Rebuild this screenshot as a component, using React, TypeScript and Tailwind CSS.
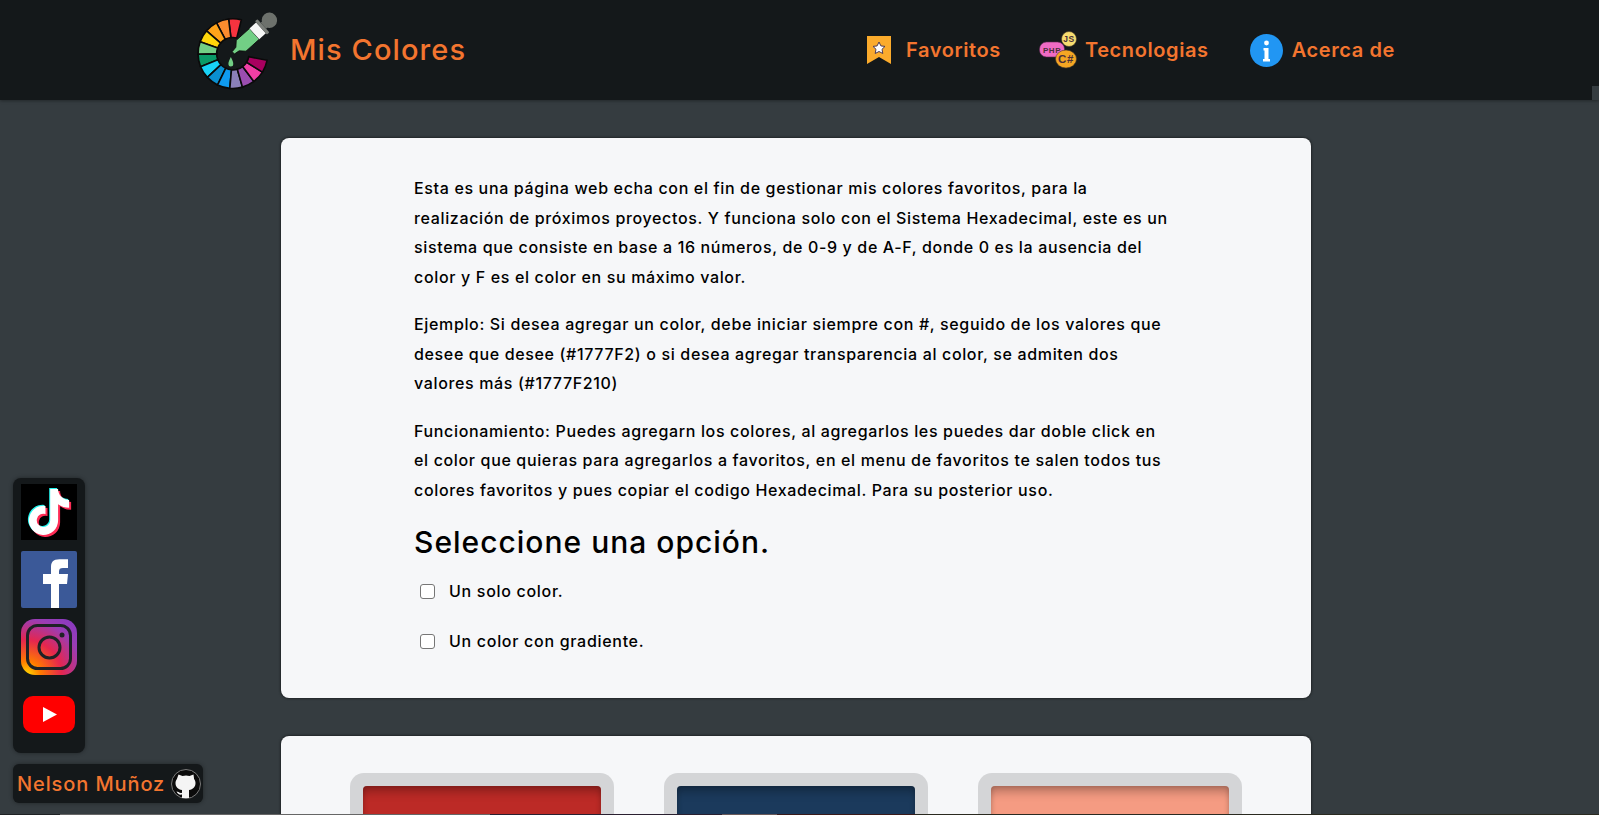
import { FaTiktok } from "react-icons/fa6";

const orange = "text-[#f3752f]";

const wheelColors = [
  "#f5333f", "#fb8c2e", "#ffa31a", "#ffd60a", "#72cf85", "#0a9a68", "#18d2f7",
  "#0a8fd0", "#0f9bf0", "#8a7fb8", "#9b4db0", "#f03fa5", "#a8005f",
];

function wedge(i: number) {
  const cx = 45.5;
  const cy = 60;
  const r1 = 43;
  const r2 = 20;
  const start = -76 - i * 21;
  const end = start - 21;
  const pt = (r: number, a: number) => {
    const rad = (a * Math.PI) / 180;
    return `${(cx + r * Math.cos(rad)).toFixed(2)} ${(cy + r * Math.sin(rad)).toFixed(2)}`;
  };
  return `M${pt(r1, start)} A${r1} ${r1} 0 0 0 ${pt(r1, end)} L${pt(r2, end)} A${r2} ${r2} 0 0 1 ${pt(r2, start)} Z`;
}

function Logo() {
  return (
    <svg width="94" height="90" viewBox="0 0 116 111" aria-hidden="true">
      {wheelColors.map((c, i) => (
        <path key={c} d={wedge(i)} fill={c} stroke="#0a0a0a" strokeWidth="2" />
      ))}
      <g transform="translate(46 59) rotate(48)">
        <path d="M-2 0h4l1 -7 6 -6v-22h-18v22l6 6z" fill="#72cf85" stroke="#0a0a0a" strokeWidth="1" />
        <rect x="-9" y="-46" width="18" height="11" fill="#f6f6f6" />
        <rect x="-11" y="-50" width="22" height="4" rx="1" fill="#7b7f7a" />
        <rect x="-5" y="-55" width="10" height="5" fill="#6d716c" />
        <circle cx="0" cy="-60" r="9.500" fill="#6d716c" />
      </g>
      <path d="M43 64c2 4 3 6 3 9a3 3 0 0 1-6 0c0-3 1-5 3-9z" fill="#72cf85" />
    </svg>
  );
}

function BookmarkIcon() {
  return (
    <svg width="24" height="28" viewBox="0 0 24 28" aria-hidden="true">
      <path d="M0 0h24v28l-12-7-12 7z" fill="#fbab2c" />
      <path d="M12 6l1.900 3.900 4.100.5-3 2.900.8 4.200-3.800-2-3.800 2 .8-4.200-3-2.900 4.100-.5z" fill="#fff" stroke="#4b3a55" strokeWidth="1" />
    </svg>
  );
}

function TechIcon() {
  const text = { fontFamily: "Liberation Sans, sans-serif", fontWeight: 700, fill: "#4a2f3a" };
  return (
    <svg width="39" height="38" viewBox="0 0 39 38" aria-hidden="true">
      <circle cx="30" cy="8" r="7.500" fill="#f7dc6f" stroke="#4a3a2a" strokeWidth="0.6" />
      <text x="30" y="11" fontSize="8.500" textAnchor="middle" {...text}>JS</text>
      <rect x="0.500" y="11" width="25" height="15" rx="7" fill="#f06bc4" stroke="#5a2a50" strokeWidth="0.6" />
      <text x="13" y="21.500" fontSize="8" textAnchor="middle" {...text}>PHP</text>
      <ellipse cx="27" cy="28" rx="10.500" ry="9" fill="#f5a623" stroke="#4a3a2a" strokeWidth="0.6" />
      <text x="27" y="32" fontSize="11.500" textAnchor="middle" {...text}>C#</text>
    </svg>
  );
}

function InfoIcon() {
  return (
    <svg width="33" height="33" viewBox="0 0 33 33" aria-hidden="true">
      <circle cx="16.500" cy="16.500" r="16.500" fill="#2196f3" />
      <circle cx="16.500" cy="9" r="2.400" fill="#fff" />
      <path d="M13.500 14h5v11h1.500v2.500h-7V25h1.500v-8.500h-1z" fill="#fff" />
    </svg>
  );
}

function TikTokIcon() {
  return (
    <div className="relative h-[56px] w-[56px] bg-black">
      <FaTiktok className="absolute left-[3.500px] top-[3.500px] text-[#25f4ee]" size={46} />
      <FaTiktok className="absolute left-[6.500px] top-[6.500px] text-[#fe2c55]" size={46} />
      <FaTiktok className="absolute left-[5px] top-[5px] text-white" size={46} />
    </div>
  );
}

function FacebookIcon() {
  return (
    <svg width="56" height="57" viewBox="0 0 56 57" aria-hidden="true">
      <rect width="56" height="57" rx="2" fill="#3b5998" />
      <path d="M30 57V33h-8V23h8v-7c0-7 4-7.800 11-7.800h6V17h-5c-3 0-4 1-4 3.500V23h9l-1 10h-8v24z" fill="#fff" />
    </svg>
  );
}

function InstagramIcon() {
  return (
    <svg width="56" height="56" viewBox="0 0 56 56" aria-hidden="true">
      <defs>
        <radialGradient id="ig" cx="0.1" cy="1" r="1.25">
          <stop offset="0" stopColor="#ffdd00" />
          <stop offset="0.2" stopColor="#ff7a00" />
          <stop offset="0.5" stopColor="#e5264f" />
          <stop offset="0.8" stopColor="#9a3db5" />
          <stop offset="1" stopColor="#8a3ac0" />
        </radialGradient>
      </defs>
      <rect width="56" height="56" rx="14" fill="url(#ig)" />
      <rect x="6.500" y="6.500" width="43" height="43" rx="10" fill="none" stroke="#1e2226" strokeWidth="3" />
      <circle cx="28.500" cy="28.500" r="10.500" fill="none" stroke="#1e2226" strokeWidth="3" />
      <circle cx="41" cy="16" r="2.500" fill="#1e2226" />
    </svg>
  );
}

function YoutubeIcon() {
  return (
    <svg width="52" height="37" viewBox="0 0 52 37" aria-hidden="true">
      <rect width="52" height="37" rx="10" fill="#ff0000" />
      <path d="M20 11l14 7.500-14 7.500z" fill="#fff" />
    </svg>
  );
}

function GithubIcon() {
  return (
    <svg width="30" height="30" viewBox="0 0 30 30" aria-hidden="true">
      <circle cx="15" cy="15" r="14.500" fill="#0b0b0b" stroke="#7a7a7a" strokeWidth="1" />
      <path d="M7.500 5.500l4 1.500a11 11 0 0 1 7 0l4-1.500.6 4.500c1 1.300 1.400 2.700 1.400 4 0 4-2.500 6.500-6.500 7V29h-7v-3.500c-2.500.5-4.500-.5-5.500-3l2 .5c1 1 2.300 1.200 3.500.800V21c-4-.5-6.500-3-6.500-7 0-1.300.4-2.700 1.400-4z" fill="#f4f4f4" />
    </svg>
  );
}

const paragraphs = [
  [
    "Esta es una página web echa con el fin de gestionar mis colores favoritos, para la",
    "realización de próximos proyectos. Y funciona solo con el Sistema Hexadecimal, este es un",
    "sistema que consiste en base a 16 números, de 0-9 y de A-F, donde 0 es la ausencia del",
    "color y F es el color en su máximo valor.",
  ],
  [
    "Ejemplo: Si desea agregar un color, debe iniciar siempre con #, seguido de los valores que",
    "desee que desee (#1777F2) o si desea agregar transparencia al color, se admiten dos",
    "valores más (#1777F210)",
  ],
  [
    "Funcionamiento: Puedes agregarn los colores, al agregarlos les puedes dar doble click en",
    "el color que quieras para agregarlos a favoritos, en el menu de favoritos te salen todos tus",
    "colores favoritos y pues copiar el codigo Hexadecimal. Para su posterior uso.",
  ],
];

const swatches = [
  { id: "red", cls: "bg-[#bc2a26]" },
  { id: "navy", cls: "bg-[#1b3a5c]" },
  { id: "salmon", cls: "bg-[#f59b82]" },
];

export default function App() {
  return (
    <div
      className="relative h-[815px] overflow-hidden bg-[#353c40] text-black"
      style={{ fontFamily: "Inter, 'Liberation Sans', sans-serif" }}
    >
      <header className="relative flex h-[100px] items-center bg-[#14181a] pl-[196px] shadow-[0_1px_3px_rgba(0,0,0,0.35)]">
        <Logo />
        <div className={`text-[29px] font-medium tracking-[1.100px] ${orange}`}>Mis Colores</div>
        <nav className={`ml-auto mr-[204px] flex items-center text-[20px] font-semibold tracking-[0.600px] ${orange}`}>
          <BookmarkIcon />
          <span className="ml-[15px]">Favoritos</span>
          <span className="ml-[38px]"><TechIcon /></span>
          <span className="ml-[7px]">Tecnologias</span>
          <span className="ml-[41px]"><InfoIcon /></span>
          <span className="ml-[9px]">Acerca de</span>
        </nav>
        <div className="absolute bottom-0 right-0 h-[14px] w-[7px] bg-[#353c40]" />
      </header>

      <main className="flex w-[1592px] flex-col items-center gap-[38px] pt-[38px]">
        <section className="h-[560px] w-[1030px] shrink-0 rounded-[8px] bg-[#f6f7f9] px-[133px] pt-[36px] shadow-[0_0_3px_rgba(0,0,0,0.8)]">
          <div className="flex flex-col gap-[18px] text-[16px] font-medium leading-[29.500px] tracking-[0.650px]">
            {paragraphs.map((lines) => (
              <p key={lines[0]}>
                {lines.map((l) => (
                  <span key={l} className="block whitespace-nowrap">{l}</span>
                ))}
              </p>
            ))}
          </div>
          <h2 className="mt-[15px] text-[30px] font-medium leading-[44px] tracking-[1px]">Seleccione una opción.</h2>
          <div className="mt-[15px] flex flex-col gap-[26px] pl-[6px] text-[16px] font-medium leading-[24px] tracking-[0.700px]">
            {["Un solo color.", "Un color con gradiente."].map((t) => (
              <label key={t} className="flex items-center gap-[14px]">
                <span className="h-[15px] w-[15px] rounded-[3px] border border-[#767676] bg-white" />
                {t}
              </label>
            ))}
          </div>
        </section>

        <section className="flex h-[300px] w-[1030px] shrink-0 justify-center gap-[50px] rounded-[8px] bg-[#f6f7f9] pt-[37px] shadow-[0_0_3px_rgba(0,0,0,0.8)]">
          {swatches.map((s) => (
            <div key={s.id} className="h-[260px] w-[264px] rounded-t-[14px] bg-[#d4d5d7] px-[13px] pt-[13px]">
              <div className={`h-[200px] rounded-[4px] shadow-[inset_0_10px_10px_-4px_rgba(0,0,0,0.25),inset_0_0_5px_rgba(0,0,0,0.2)] ${s.cls}`} />
            </div>
          ))}
        </section>
      </main>

      <aside className="absolute left-[13px] top-[478px] flex h-[275px] w-[72px] flex-col items-center rounded-[8px] bg-[#14181a] pt-[6px] shadow-[0_0_4px_rgba(0,0,0,0.4)]">
        <TikTokIcon />
        <div className="mt-[11px]"><FacebookIcon /></div>
        <div className="mt-[11px]"><InstagramIcon /></div>
        <div className="mt-[21px]"><YoutubeIcon /></div>
      </aside>

      <div className={`absolute left-[13px] top-[764px] flex h-[39px] w-[190px] items-center gap-[6px] rounded-[6px] bg-[#14181a] pl-[4px] text-[20px] font-medium tracking-[0.900px] shadow-[0_0_4px_rgba(0,0,0,0.4)] ${orange}`}>
        <span className="whitespace-nowrap">Nelson Muñoz</span>
        <GithubIcon />
      </div>

      <div className="absolute inset-x-0 bottom-0 flex h-px bg-[#2a2a20]">
        <div className="w-[60px] bg-[#1f2224]" />
        <div className="w-[430px] bg-[#666]" />
        <div className="w-[232px] bg-[#2a2030]" />
        <div className="w-[55px] bg-[#6a5a5a]" />
        <div className="w-[138px] bg-[#3a1a1a]" />
      </div>
    </div>
  );
}
